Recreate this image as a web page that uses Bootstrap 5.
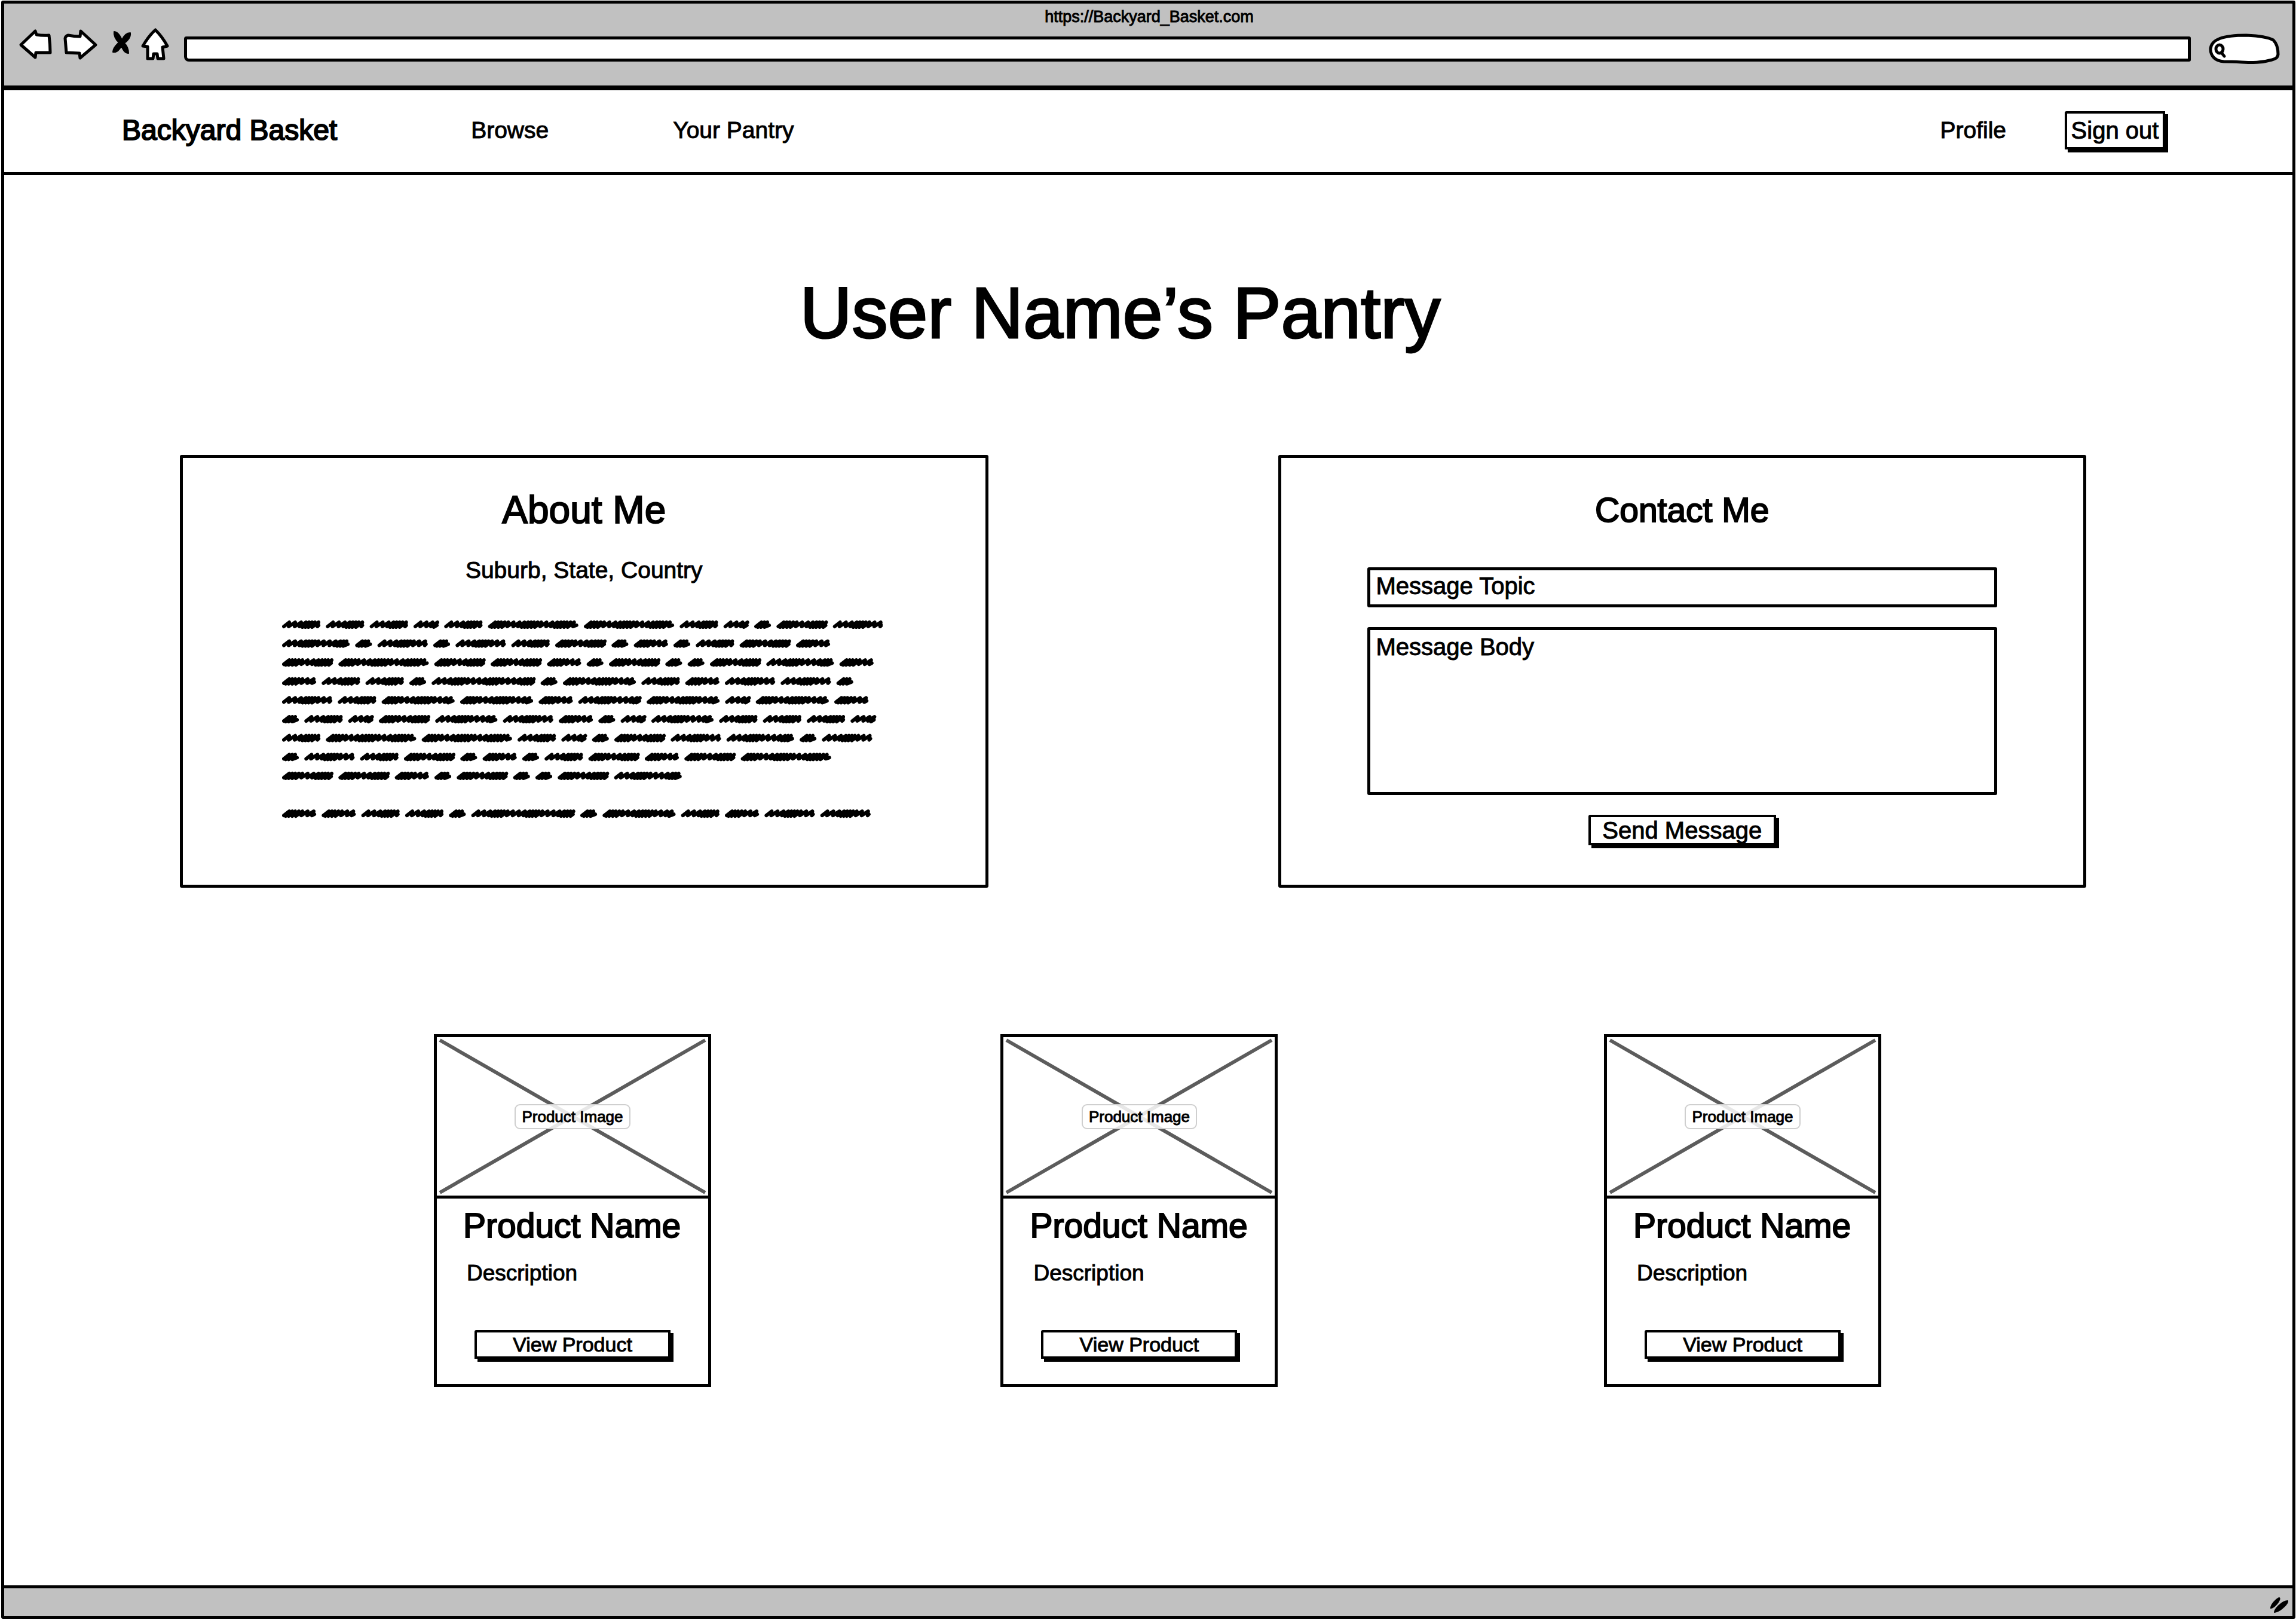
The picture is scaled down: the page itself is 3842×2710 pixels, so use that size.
<!DOCTYPE html>
<html lang="en">
<head>
<meta charset="utf-8">
<meta name="viewport" content="width=device-width, initial-scale=1">
<title>Backyard Basket</title>
<link href="https://cdn.jsdelivr.net/npm/bootstrap@5.3.0/dist/css/bootstrap.min.css" rel="stylesheet">
<style>
  :root { --ink: #000; --chrome: #c1c1c1; --line: 5px; }
  body {
    font-family: "Liberation Sans", Arial, sans-serif;
    color: var(--ink);
    background: #fff;
    padding: 1px 1px 2px 2px;
    -webkit-text-stroke: 1px var(--ink);
  }
  .window { min-height: calc(100vh - 3px); border: var(--line) solid var(--ink); border-radius: 3px; }
  svg { display: block; fill: none; stroke: var(--ink); stroke-width: 5; stroke-linejoin: round; stroke-linecap: round; }

  /* browser chrome */
  .chrome-top { background: var(--chrome); height: 145px; padding: 4px 18px 0 21px; border-bottom: 8px solid var(--ink); }
  .chrome-url { font-size: 27px; line-height: 36px; }
  .tool { border: 0; background: none; padding: 0; }
  .address { height: 42px; margin: 15px 28px 0 22px; border: var(--line) solid var(--ink); border-radius: 4px 3px 3px 8px; background: #fff; min-width: 0; }
  .finder { width: 124px; }
  .finder input { border: 0; background: none; inset: 16px 8px 8px 36px; width: 76px; height: 36px; }
  .chrome-bottom { background: var(--chrome); height: 51px; border-top: var(--line) solid var(--ink); padding: 14px 6px 0 0; }

  /* site bar */
  .site-bar { height: 142px; padding: 0 213px 4px 197px; border-bottom: var(--line) solid var(--ink); }
  .site-bar a { color: var(--ink); text-decoration: none; font-size: 39px; line-height: 48px; }
  .site-bar .brand { font-size: 48px; margin-right: 226px; -webkit-text-stroke: 2px var(--ink); }
  .main-links { gap: 208px; }
  .user-links { gap: 98px; }

  .ink-btn {
    background: #fff; color: var(--ink); border: 4px solid var(--ink); border-radius: 3px 0 0 0; padding: 0;
    font-size: 40px; line-height: 44px; box-shadow: 5px 5px 0 var(--ink); -webkit-text-stroke: 1px var(--ink);
  }
  .ink-btn:hover { background: #eee; }
  .btn-out { width: 168px; height: 64px; }
  .btn-send { width: 314px; height: 51px; line-height: 42px; }
  .btn-view { width: 328px; height: 48px; font-size: 34px; line-height: 36px; margin: 73px 0 0 63px; }

  /* pantry page */
  .page-title { font-size: 120px; line-height: 144px; font-weight: 400; margin: 158px 94px 166px 0; -webkit-text-stroke: 3px var(--ink); }
  .panels { gap: 485px; padding: 0 345px 0 294px; }
  .panel { flex: 1 1 0; min-width: 0; border: var(--line) solid var(--ink); border-radius: 3px; padding: 47px 144px 66px; }
  .panel h2 { font-size: 64px; line-height: 80px; font-weight: 400; margin: 0; -webkit-text-stroke: 2px var(--ink); }
  .panel h2.contact-title { font-size: 57px; margin-bottom: 56px; }
  .panel .place { font-size: 39px; line-height: 48px; margin: 37px 0 59px; }
  .scribble { padding: 0 28px 45px 22px; }
  .scribble svg { width: 100%; height: auto; stroke-width: 6; }
  .field {
    display: block; width: 100%; border: var(--line) solid var(--ink); border-radius: 3px; background: #fff;
    font-size: 40px; line-height: 48px; padding: 4px 10px; margin-bottom: 33px; resize: none; -webkit-text-stroke: 1px var(--ink);
  }
  .field::placeholder { color: var(--ink); opacity: 1; }
  .field-topic { height: 67px; padding: 2px 10px 7px; }
  .field-body { height: 281px; }

  .goods { display: grid; grid-template-columns: 464px 484fr 464px 545fr 464px; padding: 245px 688px 330px 719px; }
  .goods article:nth-child(2) { grid-column: 3; }
  .goods article:nth-child(3) { grid-column: 5; }
  .good-image { height: 275px; border: var(--line) solid var(--ink); }
  .good-image svg { position: absolute; inset: 0; width: 100%; height: 100%; stroke: #5c5c5c; stroke-width: 6; stroke-linecap: butt; }
  .good-image span {
    position: relative; font-size: 26px; line-height: 38px; padding: 0 10px; border: 2px solid #cfcfcf; border-radius: 9px;
    background: rgba(255,255,255,.85);
  }
  .good-text { border: var(--line) solid var(--ink); border-top: 0; padding: 13px 0 42px; }
  .good-text h3 { font-size: 57px; line-height: 64px; font-weight: 400; margin: 0 0 26px 44px; -webkit-text-stroke: 2px var(--ink); }
  .good-text p { font-size: 37px; line-height: 44px; margin: 0 0 0 50px; }
</style>
</head>
<body>
<div class="window d-flex flex-column">
  <header class="chrome-top">
    <div class="chrome-url text-center">https://Backyard_Basket.com</div>
    <div class="d-flex align-items-start">
      <button class="tool me-2 pe-1" aria-label="Back"><svg width="62" height="56"><path fill="#fff" d="M7 29 31 6 33 12Q44 14 54 13 56 28 56 42L32 42 31 50Z"/></svg></button>
      <button class="tool me-3" aria-label="Forward"><svg width="68" height="56"><path fill="#fff" d="M7 18Q8 14 12 13 22 15 32 15L33 6 58 29 32 51 31 43 9 42Q8 30 7 18Z"/></svg></button>
      <button class="tool me-2 pe-1" aria-label="Stop"><svg width="36" height="56"><path fill="#000" stroke-width="2" d="M5 7C12 7 17 18 18 21 21 14 25 9 32 9 33 17 26 24 22 26 27 31 29 37 29 43 22 43 19 35 17 31 14 37 9 42 3 41 3 34 9 29 13 25 7 20 4 12 5 7Z"/></svg></button>
      <button class="tool" aria-label="Home"><svg width="52" height="56"><path fill="#fff" d="M26 4Q38 16 46 31L38 33 40 52 30 52 29 44 23 44 22 52 13 52 13 32 5 31Q15 14 26 4Z"/></svg></button>
      <input class="address flex-grow-1" type="text" aria-label="Address">
      <div class="finder position-relative">
        <svg width="124" height="64"><path fill="#fff" d="M27 57C13 56 5 48 5 36 6 20 25 13 65 13 88 14 101 16 110 21 117 28 118 40 118 45 117 51 114 52 108 54 80 62 66 57 27 57Z"/><ellipse cx="20" cy="36" rx="6" ry="7"/><path d="M23 42 28 48"/></svg>
        <input class="position-absolute" type="search" aria-label="Search">
      </div>
    </div>
  </header>

  <nav class="site-bar d-flex align-items-center justify-content-between">
    <div class="main-links d-flex align-items-center">
      <a href="#" class="brand me-3">Backyard Basket</a>
      <a href="#">Browse</a>
      <a href="#">Your Pantry</a>
    </div>
    <div class="user-links d-flex align-items-center">
      <a href="#">Profile</a>
      <button class="ink-btn btn-out">Sign out</button>
    </div>
  </nav>

  <main class="flex-grow-1">
    <h1 class="page-title text-center">User Name’s Pantry</h1>

    <div class="panels d-flex">
      <section class="panel text-center">
        <h2>About Me</h2>
        <p class="place">Suburb, State, Country</p>
        <div class="scribble"><svg id="bio" viewBox="0 0 1004 332" role="img" aria-label="Biography"></svg></div>
      </section>
      <section class="panel text-center">
        <h2 class="contact-title">Contact Me</h2>
        <form>
          <input class="field field-topic" type="text" placeholder="Message Topic" aria-label="Message Topic">
          <textarea class="field field-body" placeholder="Message Body" aria-label="Message Body"></textarea>
          <button type="button" class="ink-btn btn-send">Send Message</button>
        </form>
      </section>
    </div>

    <div class="goods">
      <article>
        <div class="good-image position-relative d-flex align-items-center justify-content-center">
          <svg viewBox="0 0 453 265" preserveAspectRatio="none"><path d="M5 5 448 260M448 5 5 260"/></svg><span>Product Image</span>
        </div>
        <div class="good-text"><h3>Product Name</h3><p>Description</p><button class="ink-btn btn-view">View Product</button></div>
      </article>
      <article>
        <div class="good-image position-relative d-flex align-items-center justify-content-center">
          <svg viewBox="0 0 453 265" preserveAspectRatio="none"><path d="M5 5 448 260M448 5 5 260"/></svg><span>Product Image</span>
        </div>
        <div class="good-text"><h3>Product Name</h3><p>Description</p><button class="ink-btn btn-view">View Product</button></div>
      </article>
      <article>
        <div class="good-image position-relative d-flex align-items-center justify-content-center">
          <svg viewBox="0 0 453 265" preserveAspectRatio="none"><path d="M5 5 448 260M448 5 5 260"/></svg><span>Product Image</span>
        </div>
        <div class="good-text"><h3>Product Name</h3><p>Description</p><button class="ink-btn btn-view">View Product</button></div>
      </article>
    </div>
  </main>

  <footer class="chrome-bottom d-flex justify-content-end">
    <svg width="32" height="30"><path fill="#000" stroke-width="2" d="M16 2C19 4 9 18 2 19 2 14 10 4 16 2ZM30 7C31 11 18 25 8 26 9 19 22 7 30 7Z"/></svg>
  </footer>
</div>
<script src="https://cdn.jsdelivr.net/npm/bootstrap@5.3.0/dist/js/bootstrap.bundle.min.js"></script>
<script>
  // Each row lists the widths of its scribbled words; an empty row is a paragraph break.
  const rows = [
    [64,64,64,42,64,151,151,64,42,28,85,84],
    [113,28,84,28,84,64,85,28,57,28,64,85,57],
    [85,151,85,85,57,28,85,28,28,85,113,57],
    [57,64,64,28,173,28,122,64,57,84,84,28],
    [84,64,122,122,57,105,122,42,122,57],
    [28,64,42,85,104,84,57,28,42,104,64,64,64,42],
    [64,151,151,64,42,28,85,84,113,28,84],
    [28,84,64,85,28,57,28,64,85,57,85,151],
    [85,85,57,28,85,28,28,85,113],
    [],
    [57,57,64,64,28,173,28,122,64,57,84,84]
  ];
  const dense = [5, 5, 6, 6, 9, 10, 8, 6];
  const loose = [10, 10, 8, 5, 5, 5, 6, 9];
  let d = '';
  rows.forEach((row, r) => {
    const y = 8 + r * 31.6;
    let x = 0;
    row.forEach(w => {
      const steps = [28, 57, 85, 122, 151].includes(w) ? dense : loose;
      let px = x + 3, i = 0;
      d += `M${px} ${y + 3}`;
      while (px + 9 <= x + w - 2) {
        const step = steps[i++ % steps.length];
        d += `L${px + 9} ${y - 4}L${px + step - 2} ${y + (step < 7 ? 4 : 3)}`;
        px += step;
      }
      d += `L${x + w - 3} ${y + 1}`;
      x += w + 9.3;
    });
  });
  document.getElementById('bio').innerHTML = `<path d="${d}"/>`;
</script>
</body>
</html>
